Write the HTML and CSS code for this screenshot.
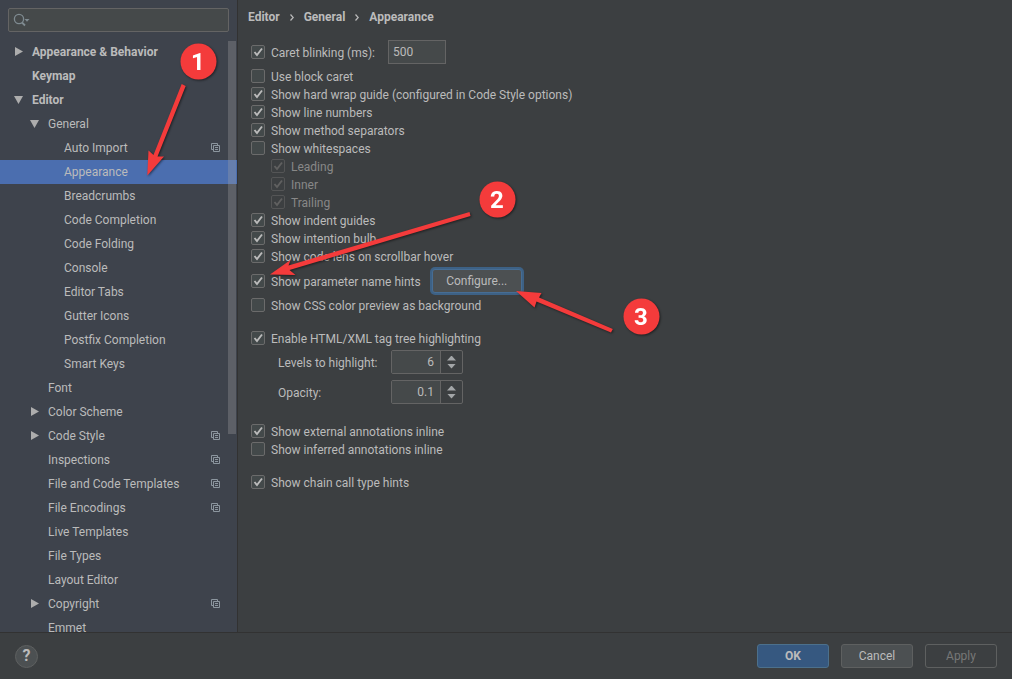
FILE: index.html
```
<!DOCTYPE html>
<html lang="en">
<head>
  <meta charset="UTF-8">
  <meta name="viewport" content="width=device-width, initial-scale=1.0">
  <title>Settings</title>
  <link rel="stylesheet" href="styles.css">
</head>
<body>
  <svg class="defs" width="0" height="0">
    <symbol id="copy" viewBox="0 0 9 9">
      <path d="M2 6.500H.5V.5H6.500V2M2.500 2.500H8.500V8.500H2.500ZM4 4.500H7M4 6.500H7" fill="none" stroke="#8c969f"/>
    </symbol>
    <symbol id="right" viewBox="0 0 9 9"><path d="M1 0L9 4.500L1 9Z" fill="#adadad"/></symbol>
    <symbol id="down" viewBox="0 0 9 9"><path d="M0 1H9L4.500 9Z" fill="#adadad"/></symbol>
    <symbol id="crumb" viewBox="0 0 4 7"><path d="M.5 .5L3.200 3.500L.5 6.500" fill="none" stroke="#bbb" stroke-width="1.200"/></symbol>
  </svg>

  <div class="dialog">
    <aside class="sidebar">
      <div class="search">
        <svg class="search-icon" width="18" height="14" viewBox="0 0 18 14">
          <circle cx="6" cy="6" r="4.600" fill="none" stroke="#7f8b91" stroke-width="1.300"/>
          <path d="M9 9.500L12 12.500" stroke="#7f8b91" stroke-width="1.800"/>
          <path d="M11.500 6H16.500L14 8.800Z" fill="#7f8b91"/>
        </svg>
        <input type="text" aria-label="Search settings">
      </div>
      <nav class="tree">
        <a href="#" class="item top"><svg class="arrow"><use href="#right"/></svg>Appearance &amp; Behavior</a>
        <a href="#" class="item top">Keymap</a>
        <a href="#" class="item top"><svg class="arrow"><use href="#down"/></svg>Editor</a>
        <a href="#" class="item sub"><svg class="arrow"><use href="#down"/></svg>General</a>
        <a href="#" class="item leaf">Auto Import<svg class="copy"><use href="#copy"/></svg></a>
        <a href="#" class="item leaf selected">Appearance</a>
        <a href="#" class="item leaf">Breadcrumbs</a>
        <a href="#" class="item leaf">Code Completion</a>
        <a href="#" class="item leaf">Code Folding</a>
        <a href="#" class="item leaf">Console</a>
        <a href="#" class="item leaf">Editor Tabs</a>
        <a href="#" class="item leaf">Gutter Icons</a>
        <a href="#" class="item leaf">Postfix Completion</a>
        <a href="#" class="item leaf">Smart Keys</a>
        <a href="#" class="item sub">Font</a>
        <a href="#" class="item sub"><svg class="arrow"><use href="#right"/></svg>Color Scheme</a>
        <a href="#" class="item sub"><svg class="arrow"><use href="#right"/></svg>Code Style<svg class="copy"><use href="#copy"/></svg></a>
        <a href="#" class="item sub">Inspections<svg class="copy"><use href="#copy"/></svg></a>
        <a href="#" class="item sub">File and Code Templates<svg class="copy"><use href="#copy"/></svg></a>
        <a href="#" class="item sub">File Encodings<svg class="copy"><use href="#copy"/></svg></a>
        <a href="#" class="item sub">Live Templates</a>
        <a href="#" class="item sub">File Types</a>
        <a href="#" class="item sub">Layout Editor</a>
        <a href="#" class="item sub"><svg class="arrow"><use href="#right"/></svg>Copyright<svg class="copy"><use href="#copy"/></svg></a>
        <a href="#" class="item sub">Emmet</a>
        <div class="scrollbar"></div>
      </nav>
    </aside>

    <main class="content">
      <div class="breadcrumb">
        <span>Editor</span>
        <svg class="crumb"><use href="#crumb"/></svg>
        <span>General</span>
        <svg class="crumb"><use href="#crumb"/></svg>
        <span>Appearance</span>
      </div>

      <form class="options">
        <div class="row caret">
          <label class="option"><input type="checkbox" checked>Caret blinking (ms):</label>
          <input class="field" type="text" value="500" aria-label="Caret blinking (ms)">
        </div>
        <label class="option"><input type="checkbox">Use block caret</label>
        <label class="option"><input type="checkbox" checked>Show hard wrap guide (configured in Code Style options)</label>
        <label class="option"><input type="checkbox" checked>Show line numbers</label>
        <label class="option"><input type="checkbox" checked>Show method separators</label>
        <label class="option"><input type="checkbox">Show whitespaces</label>
        <label class="option nested"><input type="checkbox" checked disabled>Leading</label>
        <label class="option nested"><input type="checkbox" checked disabled>Inner</label>
        <label class="option nested"><input type="checkbox" checked disabled>Trailing</label>
        <label class="option"><input type="checkbox" checked>Show indent guides</label>
        <label class="option"><input type="checkbox" checked>Show intention bulb</label>
        <label class="option"><input type="checkbox" checked>Show code lens on scrollbar hover</label>
        <div class="row hints">
          <label class="option"><input type="checkbox" checked>Show parameter name hints</label>
          <button type="button" class="btn focused">Configure...</button>
        </div>
        <label class="option"><input type="checkbox">Show CSS color preview as background</label>

        <div class="group">
          <label class="option"><input type="checkbox" checked>Enable HTML/XML tag tree highlighting</label>
          <div class="levels">
            <label for="levels">Levels to highlight:</label>
            <div class="spinner">
              <input id="levels" type="text" value="6">
              <div class="steps">
                <button type="button" class="step up" aria-label="More levels"></button>
                <button type="button" class="step down" aria-label="Fewer levels"></button>
              </div>
            </div>
            <label for="opacity">Opacity:</label>
            <div class="spinner">
              <input id="opacity" type="text" value="0.1">
              <div class="steps">
                <button type="button" class="step up" aria-label="More opacity"></button>
                <button type="button" class="step down" aria-label="Less opacity"></button>
              </div>
            </div>
          </div>
        </div>

        <div class="group annotations">
          <label class="option"><input type="checkbox" checked>Show external annotations inline</label>
          <label class="option"><input type="checkbox">Show inferred annotations inline</label>
        </div>

        <div class="group">
          <label class="option"><input type="checkbox" checked>Show chain call type hints</label>
        </div>
      </form>
    </main>
  </div>

  <footer class="footer">
    <button type="button" class="help" aria-label="Help">?</button>
    <div class="actions">
      <button type="button" class="btn primary">OK</button>
      <button type="button" class="btn">Cancel</button>
      <button type="button" class="btn" disabled>Apply</button>
    </div>
  </footer>

  <!-- numbered callouts over the dialog -->
  <svg class="callouts" width="1012" height="679" viewBox="0 0 1012 679">
    <g class="arrows">
      <path d="M181.700 84L153.500 155L148.500 150.500L147.300 175.500L164 156.500L157.500 156.500L185.700 86Z"/>
      <path d="M469.500 212L288.500 265.500L290.500 260L270 274.500L295.500 275L289.500 270L470.500 216Z"/>
      <path d="M612.800 329L539 297.500L541.500 293L516 291L534.500 307.500L536.500 301.500L611 332.500Z"/>
    </g>
    <g class="badges">
      <circle cx="198.500" cy="61.500" r="18"/>
      <circle cx="497.500" cy="199.500" r="18"/>
      <circle cx="641.500" cy="316.500" r="18"/>
    </g>
    <g class="numbers">
      <text x="198" y="70">1</text>
      <text x="497" y="208">2</text>
      <text x="641" y="325">3</text>
    </g>
  </svg>
</body>
</html>
```
FILE: styles.css
```
* {
  box-sizing: border-box;
}
body {
  margin: 0;
  height: 100vh;
  display: flex;
  flex-direction: column;
  overflow: hidden;
  position: relative;
  background: #3c3f41;
  color: #bbbbbb;
  font-family: Roboto, "Open Sans", sans-serif;
  font-size: 12px;
  line-height: 18px;
}
input, button {
  font: inherit;
  color: inherit;
  margin: 0;
}
.defs {
  position: absolute;
}
.dialog {
  flex: 1;
  min-height: 0;
  display: flex;
}

/* sidebar */
.sidebar {
  width: 238px;
  flex-shrink: 0;
  display: flex;
  flex-direction: column;
  background: #3e434c;
  border-right: 1px solid #323232;
}
.search {
  display: flex;
  align-items: center;
  height: 24px;
  margin: 8px;
  padding-left: 4px;
  background: #45494a;
  border: 1px solid #646464;
  border-radius: 2px;
}
.search-icon {
  flex-shrink: 0;
}
.search input {
  flex: 1;
  min-width: 0;
  background: none;
  border: none;
  outline: none;
}
.tree {
  flex: 1;
  min-height: 0;
  overflow: hidden;
  position: relative;
}
.item {
  display: flex;
  align-items: center;
  height: 24px;
  padding-right: 17px;
  color: inherit;
  text-decoration: none;
}
.top {
  padding-left: 32px;
  font-weight: bold;
}
.sub {
  padding-left: 48px;
}
.leaf {
  padding-left: 64px;
}
.selected {
  background: #4b6eaf;
}
.arrow {
  width: 9px;
  height: 9px;
  margin: 0 9px 1px -18px;
}
.copy {
  width: 9px;
  height: 9px;
  margin: 0 0 1px auto;
}
.scrollbar {
  position: absolute;
  top: 1px;
  right: 1px;
  width: 8px;
  height: 393px;
  background: rgba(166, 166, 166, 0.3);
}

/* settings page */
.content {
  flex: 1;
  min-width: 0;
  padding: 8px 10px;
}
.breadcrumb {
  display: flex;
  align-items: center;
  font-weight: bold;
}
.crumb {
  width: 4px;
  height: 7px;
  margin: 0 10px;
}
.options {
  padding: 14px 3px 0;
}
.row {
  display: flex;
  align-items: center;
}
.row .option {
  padding-top: 2px;
}
.caret {
  gap: 13px;
  margin-bottom: 4px;
}
.hints {
  height: 30px;
  gap: 11px;
  margin-bottom: 1px;
}
.option {
  display: flex;
  align-items: center;
  gap: 6px;
}
.nested {
  margin-left: 20px;
  color: #888888;
}
input[type="checkbox"] {
  appearance: none;
  width: 14px;
  height: 14px;
  margin-bottom: 2px;
  background: #43494a no-repeat center;
  border: 1px solid #6b6b6b;
  border-radius: 2px;
}
input[type="checkbox"]:checked {
  background-image: url("data:image/svg+xml,%3Csvg xmlns='http://www.w3.org/2000/svg' width='12' height='12'%3E%3Cpath d='M2.500 6L5 9L10 2.500' fill='none' stroke='%23bbbbbb' stroke-width='1.900'/%3E%3C/svg%3E");
}
input[type="checkbox"]:disabled {
  background-color: #3c3f41;
  border-color: #545556;
}
input[type="checkbox"]:disabled:checked {
  background-image: url("data:image/svg+xml,%3Csvg xmlns='http://www.w3.org/2000/svg' width='12' height='12'%3E%3Cpath d='M2.500 6L5 9L10 2.500' fill='none' stroke='%23606060' stroke-width='1.900'/%3E%3C/svg%3E");
}
.field {
  width: 58px;
  height: 24px;
  padding: 0 4px;
  background: #45494a;
  border: 1px solid #646464;
}
.group {
  margin-top: 15px;
}
.annotations {
  margin-top: 19px;
}
.levels {
  display: grid;
  grid-template-columns: 113px 72px;
  row-gap: 6px;
  align-items: center;
  margin: 2px 0 0 27px;
}
.levels label {
  padding-top: 2px;
}
.spinner {
  display: flex;
  height: 24px;
  border: 1px solid #646464;
  border-radius: 2px;
}
.spinner input {
  flex: 1;
  min-width: 0;
  padding: 0 6px;
  background: #45494a;
  border: none;
  border-right: 1px solid #646464;
  text-align: right;
}
.steps {
  width: 21px;
  display: flex;
  flex-direction: column;
  align-items: center;
  justify-content: center;
  gap: 3px;
}
.step {
  width: 9px;
  height: 5px;
  padding: 0;
  border: none;
  background: #a3a6a8;
}
.up {
  clip-path: polygon(50% 0, 100% 100%, 0 100%);
}
.down {
  clip-path: polygon(0 0, 100% 0, 50% 100%);
}

/* buttons */
.btn {
  width: 72px;
  height: 24px;
  padding: 0;
  background: #4c5052;
  border: 1px solid #5e6060;
  border-radius: 3px;
}
.focused {
  width: 90px;
  border-color: #466d94;
  box-shadow: 0 0 0 2px #3d6185;
}
.primary {
  background: #365880;
  border-color: #4c708c;
  font-weight: bold;
}
.btn:disabled {
  background: none;
  color: #777777;
}
.footer {
  display: flex;
  align-items: center;
  justify-content: space-between;
  height: 47px;
  padding: 0 15px;
  border-top: 1px solid #323232;
}
.actions {
  display: flex;
  gap: 12px;
}
.help {
  width: 23px;
  height: 23px;
  padding: 0;
  background: #4c5052;
  border: 1px solid #5e6060;
  border-radius: 50%;
  font-size: 16px;
  font-weight: bold;
}

/* callouts */
.callouts {
  position: absolute;
  top: 0;
  left: 0;
  pointer-events: none;
  filter: drop-shadow(1px 1px 1px rgba(0, 0, 0, 0.5));
}
.arrows, .badges {
  fill: #f43b3b;
}
.numbers {
  fill: #ffffff;
  font-size: 24px;
  font-weight: bold;
  text-anchor: middle;
}
```
